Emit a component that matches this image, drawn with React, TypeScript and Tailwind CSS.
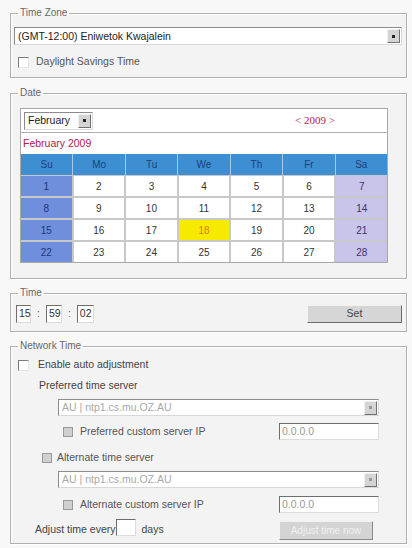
import React from "react";

const font = { fontFamily: '"Liberation Sans", Arial, sans-serif' };

function Legend({ children }: { children: React.ReactNode }) {
  return (
    <legend className="ml-[4px] px-[2px] text-[10px] leading-[14px] text-[#666]">
      {children}
    </legend>
  );
}

function Select({
  value,
  disabled,
  className,
}: {
  value: string;
  disabled?: boolean;
  className: string;
}) {
  return (
    <div
      className={
        "flex items-center border border-t-[#8c8c8c] border-l-[#8c8c8c] border-r-[#d8d8d8] border-b-[#d8d8d8] bg-white " +
        className
      }
    >
      <div
        className={
          "flex-1 truncate pl-[3px] text-[10.5px] leading-[15px] " +
          (disabled ? "text-[#a8a8a8]" : "text-[#222]")
        }
      >
        {value}
      </div>
      <div className="mr-[1px] flex h-[14px] w-[13px] items-center justify-center border border-t-[#f0f0f0] border-l-[#f0f0f0] border-r-[#707070] border-b-[#707070] bg-[#d4d4d4]">
        <div className={"h-[3px] w-[3px] " + (disabled ? "bg-[#9a9a9a]" : "bg-[#222]")} />
      </div>
    </div>
  );
}

function Check({ disabled }: { disabled?: boolean }) {
  if (disabled)
    return (
      <div className="h-[10px] w-[10px] border border-[#9a9a9a] bg-[#d0d0d0]" />
    );
  return (
    <div className="h-[11px] w-[11px] border border-t-[#7a7a7a] border-l-[#7a7a7a] border-r-[#e6e6e6] border-b-[#e6e6e6] bg-white" />
  );
}

function Box({ value, className }: { value: string; className: string }) {
  return (
    <div
      className={
        "border border-t-[#6e6e6e] border-l-[#6e6e6e] border-r-[#dcdcdc] border-b-[#dcdcdc] bg-white pl-[2px] text-[10.5px] leading-[15px] " +
        className
      }
    >
      {value}
    </div>
  );
}

const fieldset =
  "ml-[10px] mr-[5px] border border-[#b0b0b0] bg-[#f3f3f3] px-[3px] shadow-[inset_1px_1px_0_#fff,1px_1px_0_#fff]";

const days = ["Su", "Mo", "Tu", "We", "Th", "Fr", "Sa"];
const weeks = [
  [1, 2, 3, 4, 5, 6, 7],
  [8, 9, 10, 11, 12, 13, 14],
  [15, 16, 17, 18, 19, 20, 21],
  [22, 23, 24, 25, 26, 27, 28],
];

function Calendar() {
  return (
    <div className="ml-[6px] mt-[8px] w-[368px] border border-[#a8a8a8] bg-white">
      <div className="flex h-[24px] items-center justify-between border-b border-[#b0b0b0] pl-[3px] pr-[52px]">
        <Select value="February" className="h-[18px] w-[69px]" />
        <div
          className="text-[11px] text-[#b0204a]"
          style={{ fontFamily: '"Liberation Serif", serif' }}
        >
          &lt; 2009 &gt;
        </div>
      </div>
      <div className="flex h-[21px] items-center pl-[2px] text-[10.5px] text-[#b0204a]">
        February 2009
      </div>
      <div className="grid grid-cols-7 gap-x-[1px] bg-[#a6c8ea]">
        {days.map((d) => (
          <div
            key={d}
            className="flex h-[21px] items-center justify-center bg-[#3d8fd2] text-[10px] text-[#1d3f7c]"
          >
            {d}
          </div>
        ))}
      </div>
      <div className="grid grid-cols-7 gap-[2px] bg-[#c8c8c8] pt-[1px]">
        {weeks.flat().map((n, i) => {
          const col = i % 7;
          let cls = "bg-white text-[#333]";
          if (col === 0) cls = "bg-[#6f8fdc] text-[#22357c]";
          if (col === 6) cls = "bg-[#c9c4ea] text-[#3a3468]";
          if (n === 18) cls = "bg-[#f6ea00] text-[#e07a10]";
          return (
            <div
              key={n}
              className={"flex h-[20px] items-center justify-center text-[10px] " + cls}
            >
              {n}
            </div>
          );
        })}
      </div>
    </div>
  );
}

export default function App() {
  return (
    <div
      className="min-h-screen w-[412px] bg-[#f8f8f8] pt-[6px] text-[#333]"
      style={font}
    >
      <fieldset className={fieldset + " pb-[8px]"}>
        <Legend>Time Zone</Legend>
        <Select
          value="(GMT-12:00) Eniwetok Kwajalein"
          className="mt-[7px] h-[18px] w-[388px]"
        />
        <div className="ml-[4px] mt-[10px] flex h-[14px] items-center gap-[7px] text-[10.5px] text-[#555]">
          <Check />
          <span>Daylight Savings Time</span>
        </div>
      </fieldset>

      <fieldset className={fieldset + " mt-[8px] pb-[15px]"}>
        <Legend>Date</Legend>
        <Calendar />
      </fieldset>

      <fieldset className={fieldset + " mt-[7px] pb-[8px]"}>
        <Legend>Time</Legend>
        <div className="mt-[5px] flex h-[18px] items-center text-[10.5px]">
          <Box value="15" className="ml-[2px] h-[18px] w-[15px]" />
          <span className="mx-[6px] text-[#666]">:</span>
          <Box value="59" className="h-[18px] w-[16px]" />
          <span className="mx-[6px] text-[#666]">:</span>
          <Box value="02" className="h-[18px] w-[17px]" />
          <div className="ml-auto mr-[1px] flex h-[18px] w-[95px] items-center justify-center border border-t-[#f2f2f2] border-l-[#f2f2f2] border-r-[#6a6a6a] border-b-[#6a6a6a] bg-[#d6d6d6] text-[10.5px] text-[#444]">
            Set
          </div>
        </div>
      </fieldset>

      <fieldset className={fieldset + " mt-[7px] pb-[3px] text-[10.5px] text-[#444]"}>
        <Legend>Network Time</Legend>
        <div className="ml-[4px] mt-[5px] flex h-[14px] items-center gap-[9px]">
          <Check />
          <span>Enable auto adjustment</span>
        </div>
        <div className="ml-[25px] mt-[7px] flex h-[14px] items-center">
          Preferred time server
        </div>
        <Select
          value="AU | ntp1.cs.mu.OZ.AU"
          disabled
          className="ml-[44px] mt-[6px] h-[17px] w-[321px]"
        />
        <div className="mt-[7px] flex h-[17px] items-center">
          <div className="ml-[49px] flex items-center gap-[7px]">
            <Check disabled />
            <span className="text-[#555]">Preferred custom server IP</span>
          </div>
          <Box value="0.0.0.0" className="ml-auto mr-[24px] h-[17px] w-[100px] text-[#999]" />
        </div>
        <div className="ml-[28px] mt-[11px] flex h-[14px] items-center gap-[5px]">
          <Check disabled />
          <span className="text-[#555]">Alternate time server</span>
        </div>
        <Select
          value="AU | ntp1.cs.mu.OZ.AU"
          disabled
          className="ml-[44px] mt-[6px] h-[17px] w-[321px]"
        />
        <div className="mt-[8px] flex h-[17px] items-center">
          <div className="ml-[49px] flex items-center gap-[7px]">
            <Check disabled />
            <span className="text-[#555]">Alternate custom server IP</span>
          </div>
          <Box value="0.0.0.0" className="ml-auto mr-[24px] h-[17px] w-[100px] text-[#999]" />
        </div>
        <div className="mt-[6px] flex h-[21px] items-start">
          <span className="ml-[21px] mt-[3px]">Adjust time every</span>
          <Box value="" className="h-[17px] w-[20px]" />
          <span className="ml-[6px] mt-[3px]">days</span>
          <div className="ml-auto mr-[30px] mt-[2px] flex h-[19px] w-[94px] items-center justify-center border border-t-[#f2f2f2] border-l-[#f2f2f2] border-r-[#8a8a8a] border-b-[#8a8a8a] bg-[#d4d4d4] text-[10px] text-[#f0f0f0]">
            Adjust time now
          </div>
        </div>
      </fieldset>
    </div>
  );
}
